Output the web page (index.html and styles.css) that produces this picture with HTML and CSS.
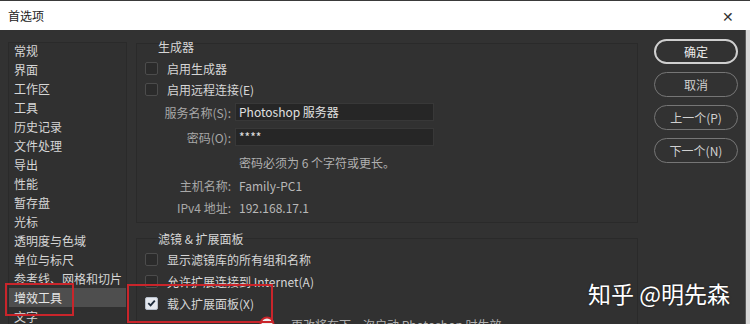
FILE: index.html
```html
<!DOCTYPE html>
<html>
<head>
    <title>首选项</title>
    <meta name="viewport" content="width=device-width, initial-scale=1.0">
    <link rel="stylesheet" href="styles.css">
</head>
<body>
    <header class="titlebar">
        <span class="title">首选项</span>
        <span class="close">&#x2715;</span>
    </header>

    <div class="dialog">
        <ul class="sidebar">
            <li>常规</li>
            <li>界面</li>
            <li>工作区</li>
            <li>工具</li>
            <li>历史记录</li>
            <li>文件处理</li>
            <li>导出</li>
            <li>性能</li>
            <li>暂存盘</li>
            <li>光标</li>
            <li>透明度与色域</li>
            <li>单位与标尺</li>
            <li>参考线、网格和切片</li>
            <li class="active">增效工具</li>
            <li>文字</li>
        </ul>

        <div class="content">
            <section class="group group-gen">
                <div class="group-title">生成器</div>
                <label class="row check-row r1"><span class="box"></span>启用生成器</label>
                <label class="row check-row r2"><span class="box"></span>启用远程连接(E)</label>
                <div class="row field r3">
                    <span class="label">服务名称(S):</span>
                    <span class="input">Photoshop 服务器</span>
                </div>
                <div class="row field r4">
                    <span class="label">密码(O):</span>
                    <span class="input">****</span>
                </div>
                <div class="row hint r5">密码必须为 6 个字符或更长。</div>
                <div class="row field r6">
                    <span class="label">主机名称:</span>
                    <span class="value">Family-PC1</span>
                </div>
                <div class="row field r7">
                    <span class="label">IPv4 地址:</span>
                    <span class="value">192.168.17.1</span>
                </div>
            </section>

            <section class="group group-ext">
                <div class="group-title">滤镜 &amp; 扩展面板</div>
                <label class="row check-row"><span class="box"></span>显示滤镜库的所有组和名称</label>
                <label class="row check-row"><span class="box"></span>允许扩展连接到 Internet(A)</label>
                <label class="row check-row">
                    <span class="box checked">
                        <svg viewBox="0 0 12 12" width="12" height="12"><path d="M2.5 6.2 L5 8.6 L9.6 3.4" fill="none" stroke="#1d2a3a" stroke-width="2"/></svg>
                    </span>载入扩展面板(X)
                </label>
                <div class="row notice">
                    <svg class="notice-icon" viewBox="0 0 16 16" width="16" height="16"><circle cx="8" cy="8" r="6.5" fill="#eee" stroke="#c9252b" stroke-width="2"/></svg>
                    <span>更改将在下一次启动 Photoshop 时生效。</span>
                </div>
            </section>
        </div>

        <div class="buttons">
            <button class="btn primary">确定</button>
            <button class="btn">取消</button>
            <button class="btn">上一个(P)</button>
            <button class="btn">下一个(N)</button>
        </div>
    </div>

    <!-- annotation overlays -->
    <div class="mark mark-list"></div>
    <div class="mark mark-check"></div>
    <div class="watermark">知乎 @明先森</div>
</body>
</html>
```

FILE: styles.css
```css
body {
    margin: 0;
    padding: 0;
    height: 324px;
    background-color: #d8d8d8;
    font-family: "Noto Sans CJK SC", "Noto Sans", sans-serif;
    font-size: 12px;
    color: #cfcfcf;
    overflow: hidden;
}

.titlebar {
    height: 29px;
    background-color: #ffffff;
    border-top: 1px solid #3a3a3a;
    display: flex;
    align-items: center;
    justify-content: space-between;
    padding: 0 16px 0 8px;
    color: #222;
}

.title {
    font-size: 12px;
}

.close {
    font-size: 14px;
    color: #333;
}

.dialog {
    display: flex;
    width: 745px;
    height: 294px;
    overflow: hidden;
    background-color: #323232;
    border-right: 1px solid #5a5a5a;
}

/* Left category list */
.sidebar {
    list-style: none;
    margin: 12px 0 0 8px;
    padding: 0;
    width: 117px;
    border: 1px solid #2a2a2a;
    border-bottom: none;
    background-color: #303030;
}

.sidebar li {
    height: 19px;
    line-height: 19px;
    padding-left: 5px;
    color: #d6d6d6;
}

.sidebar li:first-child {
    margin-top: -2px;
}

.sidebar li.active {
    background-color: #4e4e4e;
    color: #e6e6e6;
}

/* Middle settings */
.content {
    margin-left: 9px;
    width: 502px;
    padding-top: 13px;
}

.group {
    border: 1px solid #2a2a2a;
    background-color: #313131;
    padding-left: 8px;
}

.group-title {
    height: 14px;
    line-height: 14px;
    margin-top: -4px;
    padding-left: 13px;
    color: #d6d6d6;
}

.group-gen {
    height: 178px;
}

.group-ext {
    margin-top: 15px;
    height: 110px;
}

.group-ext .group-title {
    margin-top: -7px;
    margin-bottom: 2px;
}

.row {
    display: flex;
    align-items: center;
}

.check-row {
    height: 22px;
    color: #d6d6d6;
}

.group-gen .r1 {
    margin-top: 4px;
    height: 21px;
}

.group-gen .r2 {
    height: 21px;
}

.box {
    width: 11px;
    height: 11px;
    border: 1px solid #4c4c4c;
    border-radius: 2px;
    background-color: #2b2b2b;
    margin-right: 9px;
    display: flex;
    align-items: center;
    justify-content: center;
}

.box.checked {
    background-color: #e4e8ee;
    border-color: #b8c0cc;
}

.field .label {
    width: 86px;
    text-align: right;
    color: #a8a8a8;
    margin-right: 4px;
}

.field .input {
    width: 194px;
    height: 16px;
    line-height: 16px;
    background-color: #262626;
    border: 1px solid #383838;
    padding-left: 3px;
    color: #e0e0e0;
}

.field .value {
    padding-left: 4px;
    color: #b8b8b8;
}

.r3 {
    height: 24px;
}

.r4 {
    height: 26px;
}

.r5 {
    height: 24px;
}

.r6,
.r7 {
    height: 22px;
}

.hint {
    padding-left: 94px;
    color: #b0b0b0;
}

.notice {
    height: 18px;
    margin-top: 1px;
    padding-left: 114px;
    color: #b0b0b0;
}

.notice-icon {
    margin-right: 16px;
}

/* Right buttons */
.buttons {
    display: flex;
    flex-direction: column;
    gap: 8px;
    margin-left: 16px;
    padding-top: 9px;
}

.btn {
    width: 84px;
    height: 25px;
    border-radius: 13px;
    border: 1.5px solid #767676;
    background-color: #323232;
    color: #d0d0d0;
    font-family: "Noto Sans CJK SC", "Noto Sans", sans-serif;
    font-size: 12px;
    padding: 0;
    cursor: pointer;
}

.btn.primary {
    border: 2px solid #cfcfcf;
    color: #ececec;
}

/* Red annotation boxes */
.mark {
    position: absolute;
    border: 2px solid #c9252b;
}

.mark-list {
    left: 5px;
    top: 283px;
    width: 65px;
    height: 29px;
}

.mark-check {
    left: 127px;
    top: 284px;
    width: 142px;
    height: 35px;
}

.watermark {
    position: absolute;
    left: 588px;
    top: 276px;
    font-size: 23px;
    color: #ffffff;
    text-shadow: 0 0 2px rgba(0, 0, 0, 0.6);
}
```
